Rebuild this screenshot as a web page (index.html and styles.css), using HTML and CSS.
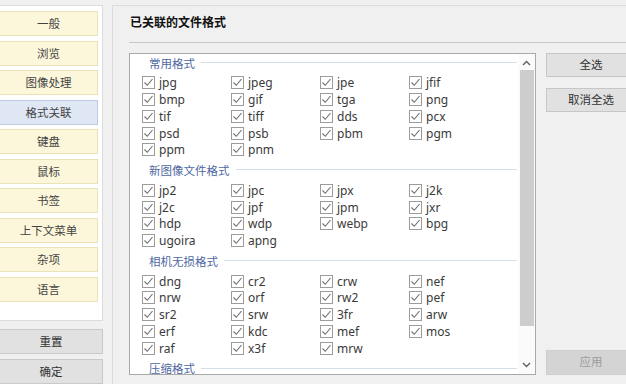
FILE: index.html
```html
<!DOCTYPE html>
<html lang="zh-CN">
<head>
  <meta charset="UTF-8" />
  <title>设置</title>
  <link rel="stylesheet" href="styles.css">
</head>
<body>
  <div class="app">
    <div class="side">
      <div class="nav">
        <div class="nav-btn">一般</div>
        <div class="nav-btn">浏览</div>
        <div class="nav-btn">图像处理</div>
        <div class="nav-btn active">格式关联</div>
        <div class="nav-btn">键盘</div>
        <div class="nav-btn">鼠标</div>
        <div class="nav-btn">书签</div>
        <div class="nav-btn">上下文菜单</div>
        <div class="nav-btn">杂项</div>
        <div class="nav-btn">语言</div>
      </div>
      <div class="side-btn">重置</div>
      <div class="side-btn">确定</div>
    </div>

    <div class="main">
      <div class="title">已关联的文件格式</div>
      <div class="sep"></div>
      <div class="content">
        <div class="listbox">
          <div class="list" id="list"></div>
          <div class="scrollbar">
            <div class="arrow up">
              <svg width="9" height="6" viewBox="0 0 9 6"><polyline points="1,5 4.5,1.5 8,5" fill="none" stroke="#606060" stroke-width="1.4"/></svg>
            </div>
            <div class="thumb"></div>
            <div class="arrow down">
              <svg width="9" height="6" viewBox="0 0 9 6"><polyline points="1,1 4.5,4.5 8,1" fill="none" stroke="#606060" stroke-width="1.4"/></svg>
            </div>
          </div>
        </div>
        <div class="actions">
          <div class="btn">全选</div>
          <div class="btn">取消全选</div>
          <div class="btn disabled">应用</div>
        </div>
      </div>
    </div>
  </div>

  <script>
    const groups = [
      ["常用格式", ["jpg", "jpeg", "jpe", "jfif", "bmp", "gif", "tga", "png", "tif", "tiff", "dds", "pcx", "psd", "psb", "pbm", "pgm", "ppm", "pnm"]],
      ["新图像文件格式", ["jp2", "jpc", "jpx", "j2k", "j2c", "jpf", "jpm", "jxr", "hdp", "wdp", "webp", "bpg", "ugoira", "apng"]],
      ["相机无损格式", ["dng", "cr2", "crw", "nef", "nrw", "orf", "rw2", "pef", "sr2", "srw", "3fr", "arw", "erf", "kdc", "mef", "mos", "raf", "x3f", "mrw"]],
      ["压缩格式", []]
    ];

    const check = '<svg width="11" height="11" viewBox="0 0 11 11"><polyline points="1.5,5.5 4.3,8.3 9.5,2" fill="none" stroke="#6e6e6e" stroke-width="1.1"/></svg>';

    let html = "";
    for (const [name, items] of groups) {
      html += `<div class="group"><div class="group-head"><span>${name}</span><i></i></div><div class="grid">`;
      for (const ext of items) {
        html += `<div class="item"><span class="box">${check}</span>${ext}</div>`;
      }
      html += "</div></div>";
    }
    document.getElementById("list").innerHTML = html;
  </script>
</body>
</html>
```

FILE: styles.css
```css
body {
  margin: 0;
  background: #f0f0f0;
  font-family: "Noto Sans", "Noto Sans CJK SC", sans-serif;
  font-size: 11.5px;
  color: #333;
}
.app {
  display: flex;
  height: 384px;
  overflow: hidden;
}
.side {
  width: 103px;
  flex-shrink: 0;
  display: flex;
  flex-direction: column;
}
.nav {
  margin-top: 5px;
  height: 324px;
  box-sizing: border-box;
  background: #fff;
  border: 1px solid #dcdcdc;
  border-left: none;
  padding-top: 5px;
  display: flex;
  flex-direction: column;
  gap: 4.55px;
}
.nav-btn {
  width: 98px;
  height: 25px;
  box-sizing: border-box;
  background: #fcf7da;
  border: 1px solid #ebe3b8;
  border-left: none;
  text-align: center;
  line-height: 23px;
  color: #444;
}
.nav-btn.active {
  background: #dfe7f4;
  border-color: #bccbe2;
}
.side-btn {
  height: 25px;
  box-sizing: border-box;
  margin-top: 8px;
  background: #e1e1e1;
  border: 1px solid #cacaca;
  border-left: none;
  text-align: center;
  line-height: 23px;
  color: #333;
}
.side-btn + .side-btn {
  margin-top: 5px;
}
.main {
  flex: 1;
  margin: 5px 0 0 9px;
  border: 1px solid #dcdcdc;
  border-right: none;
  border-bottom: none;
  padding-left: 16px;
}
.title {
  padding: 7px 0 0 1px;
  height: 20px;
  line-height: 20px;
  font-size: 12px;
  font-weight: bold;
  color: #111;
}
.sep {
  margin-top: 9px;
  height: 1px;
  background: #c8c8c8;
}
.content {
  display: flex;
  margin-top: 10px;
}
.listbox {
  width: 407px;
  height: 322px;
  box-sizing: border-box;
  border: 1px solid #a9a9a9;
  background: #fff;
  display: flex;
  overflow: hidden;
}
.list {
  flex: 1;
  padding-left: 12px;
}
.group {
  margin-bottom: 3.1px;
}
.group-head {
  display: flex;
  align-items: center;
  height: 17px;
  margin-bottom: 3.6px;
  padding-left: 7px;
  color: #4f68a2;
}
.group-head i {
  flex: 1;
  height: 1px;
  margin-left: 6px;
  margin-right: 1px;
  background: #d6dee6;
}
.grid {
  display: grid;
  grid-template-columns: repeat(4, 89px);
}
.item {
  height: 16.75px;
  display: flex;
  align-items: center;
  font-size: 12px;
  color: #3a3a3a;
}
.box {
  width: 13px;
  height: 13px;
  box-sizing: border-box;
  border: 1px solid #9c9c9c;
  margin-right: 4px;
  display: flex;
  align-items: center;
  justify-content: center;
}
.scrollbar {
  width: 17px;
  display: flex;
  flex-direction: column;
  align-items: center;
  background: #fbfbfb;
}
.arrow {
  height: 16px;
  display: flex;
  align-items: center;
  justify-content: center;
}
.arrow.up {
  margin-top: 1px;
}
.thumb {
  width: 14px;
  height: 256px;
  background: #cdcdcd;
  margin-top: -1px;
}
.arrow.down {
  margin-top: auto;
  margin-bottom: 1px;
}
.actions {
  margin-left: 10px;
  width: 90px;
  height: 322px;
  display: flex;
  flex-direction: column;
}
.btn {
  height: 24px;
  box-sizing: border-box;
  background: #e1e1e1;
  border: 1px solid #c6c6c6;
  text-align: center;
  line-height: 22px;
  color: #333;
}
.btn + .btn {
  margin-top: 11px;
}
.btn.disabled {
  margin-top: auto;
  height: 25px;
  background: #d4d4d4;
  border-color: #cfcfcf;
  color: #9c9c9c;
}
```
